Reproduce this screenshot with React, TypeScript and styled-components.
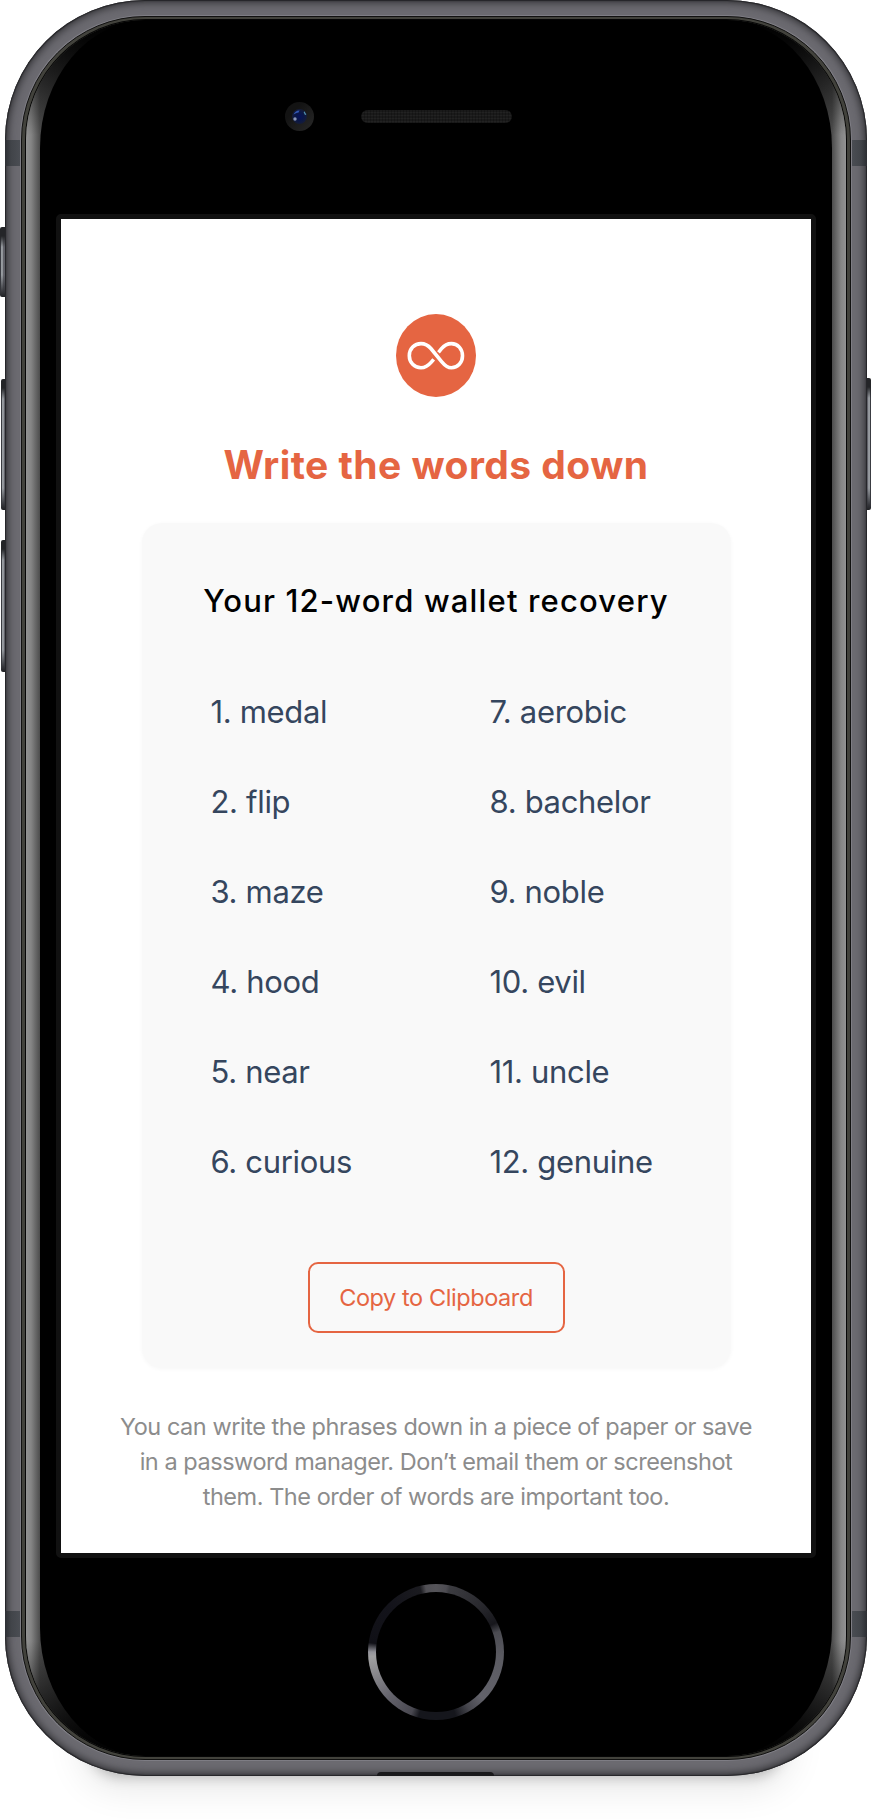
import React from "react";
import styled, { createGlobalStyle } from "styled-components";

const GlobalStyle = createGlobalStyle`
  *, *::before, *::after { box-sizing: border-box; }
  html, body { margin: 0; padding: 0; background: #fff; }
  body { font-family: Inter, "Liberation Sans", sans-serif; }
  h1, h2, p, ol { margin: 0; padding: 0; }
`;

const Stage = styled.main`
  position: relative;
  width: 871px;
  height: 1820px;
  padding-left: 5px;
  overflow: hidden;
  background: #fff;
`;

const FloorShadow = styled.div`
  position: absolute;
  left: 90px;
  top: 1690px;
  width: 692px;
  height: 78px;
  border-radius: 30px;
  box-shadow: 0 8px 14px rgba(0, 0, 0, 0.26), 0 12px 36px 8px rgba(0, 0, 0, 0.1);
`;

const SideButton = styled.span<{ $side: "left" | "right"; $top: number; $height: number; $inset?: number }>`
  position: absolute;
  ${(p) => p.$side}: ${(p) => p.$inset ?? 0}px;
  top: ${(p) => p.$top}px;
  width: 7px;
  height: ${(p) => p.$height}px;
  border-radius: 2px;
  background:
    linear-gradient(#242528 0, #242528 9px, transparent 20px, transparent calc(100% - 22px), #34353a calc(100% - 5px), #202124),
    linear-gradient(${(p) => (p.$side === "left" ? "90deg" : "270deg")}, #3a3c42 0, #3a3c42 1px, #9a9ea3 1px, #8f9398 3px, #62636a 3px, #5d5d65 6px, #333338 7px);
`;

const Body = styled.div`
  position: relative;
  width: 862px;
  height: 1776px;
  padding: 16px;
  border-radius: 140px;
  background: #6b6a70;
  box-shadow: inset 0 0 1px 1px #242427, inset 0 0 9px 2px #29292c;
`;

const Antenna = styled.span<{ $side: "left" | "right"; $top: number }>`
  position: absolute;
  ${(p) => p.$side}: 0;
  top: ${(p) => p.$top}px;
  width: 16px;
  height: 26px;
  background: linear-gradient(${(p) => (p.$side === "left" ? "90deg" : "270deg")}, #2c2e33, #414449 6px, #4b4e54);
`;

const Port = styled.span`
  position: absolute;
  left: 372px;
  bottom: 0;
  width: 117px;
  height: 4px;
  border-radius: 4px 4px 0 0;
  background: #19191b;
`;

const Rim = styled.div`
  position: relative;
  height: 100%;
  padding: 3px 4px;
  border: 1px solid #111110;
  border-radius: 124px;
  background: #42423c;
  box-shadow: 0 0 0 1px #7e7d84;
`;

const Glass = styled.div`
  height: 100%;
  padding: 0 14px;
  border-radius: 120px;
  overflow: hidden;
  box-shadow: 0 0 0 1px #060606;
  background:
    linear-gradient(rgba(0, 0, 0, 1), rgba(0, 0, 0, 0.76) 30px, rgba(0, 0, 0, 0) 115px, rgba(0, 0, 0, 0) calc(100% - 115px), rgba(0, 0, 0, 0.76) calc(100% - 30px), #000),
    linear-gradient(90deg, #929292, #858585 5px, #4c4c4c 14px, #222 60px, #222 calc(100% - 60px), #4c4c4c calc(100% - 14px), #858585 calc(100% - 5px), #929292);
`;

const Face = styled.div`
  height: 100%;
  display: flex;
  flex-direction: column;
  align-items: center;
  background: #000;
  border-radius: 108px / 128px;
`;

const TopBezel = styled.div`
  flex: none;
  width: 100%;
  height: 194px;
  padding: 82px 0 0 245px;
  display: flex;
  align-items: flex-start;
  gap: 47px;
`;

const Speaker = styled.span`
  width: 151px;
  height: 13px;
  margin-top: 8px;
  border-radius: 7px;
  background:
    repeating-linear-gradient(90deg, rgba(0, 0, 0, 0.22) 0 1px, transparent 1px 3px),
    repeating-linear-gradient(#1a1a1a 0 2px, #222 2px 3px);
`;

const Screen = styled.section`
  flex: none;
  width: 760px;
  height: 1344px;
  border: 5px solid #111;
  border-radius: 5px;
  background: linear-gradient(#fff, #fff) padding-box;
  background-color: #111;
  display: flex;
  flex-direction: column;
  align-items: center;
`;

const Logo = styled.svg`
  display: block;
  flex: none;
  margin-top: 95px;
`;

const Title = styled.h1`
  margin-top: 43px;
  font-size: 39px;
  line-height: 50px;
  font-weight: 700;
  letter-spacing: 0.46px;
  color: #e56542;
  white-space: nowrap;
`;

const Card = styled.article`
  flex: none;
  width: 589px;
  height: 845px;
  margin-top: 33px;
  border-radius: 20px;
  background: #f9f9f9;
  box-shadow: 0 1px 4px rgba(0, 0, 0, 0.035);
  display: flex;
  flex-direction: column;
  align-items: center;
`;

const CardTitle = styled.h2`
  margin-top: 58px;
  font-size: 31px;
  line-height: 40px;
  font-weight: 500;
  letter-spacing: 1.17px;
  color: #000;
  white-space: nowrap;
`;

const WordList = styled.ol`
  width: 100%;
  margin-top: 45px;
  padding-left: 69px;
  display: grid;
  grid-template-rows: repeat(6, 90px);
  grid-auto-flow: column;
  grid-auto-columns: 279px;
  list-style: none;
`;

const Word = styled.li`
  display: flex;
  align-items: center;
  font-size: 31px;
  letter-spacing: -0.33px;
  color: #35465e;
  white-space: pre;
`;

const CopyButton = styled.button`
  flex: none;
  width: 257px;
  height: 71px;
  margin-top: 56px;
  padding: 0;
  border: 2px solid #e56542;
  border-radius: 10px;
  background: transparent;
  color: #e56542;
  font: 400 23.5px Inter, "Liberation Sans", sans-serif;
  letter-spacing: -0.42px;
  white-space: nowrap;
`;

const Hint = styled.p`
  margin-top: 41px;
  font-size: 23.5px;
  line-height: 35px;
  letter-spacing: -0.46px;
  text-align: center;
  color: #8c8c8c;
  white-space: nowrap;
`;

const HomeButton = styled.div`
  flex: none;
  width: 136px;
  height: 136px;
  margin-top: 26px;
  border-radius: 50%;
  padding: 8px;
  background: conic-gradient(#555459 0deg, #4d4c52 9deg, #3c3c41 12deg, #28282d 45deg, #17171c 64deg, #4b4b51 72deg, #5b5b62 95deg, #62626a 135deg, #46464d 150deg, #15161c 163deg, #15161c 195deg, #494850 202deg, #62616a 225deg, #a1a1a2 266deg, #93939a 270deg, #101016 278deg, #13131a 315deg, #1b1b20 346deg, #515055 351deg, #555459 360deg);
`;

const HomeGlass = styled.div`
  height: 100%;
  border-radius: 50%;
  background: #000;
`;

const words = [
  "medal", "flip", "maze", "hood", "near", "curious",
  "aerobic", "bachelor", "noble", "evil", "uncle", "genuine",
];

function Camera() {
  return (
    <svg width="29" height="29" viewBox="0 0 29 29">
      <defs>
        <linearGradient id="cameraRing" x1="0" y1="0" x2="1" y2="1">
          <stop offset="0.3" stopColor="#131313" />
          <stop offset="1" stopColor="#292929" />
        </linearGradient>
        <radialGradient id="cameraLens">
          <stop offset="0" stopColor="#07125a" />
          <stop offset="0.55" stopColor="#0a1748" />
          <stop offset="1" stopColor="#151c38" />
        </radialGradient>
      </defs>
      <circle cx="14.5" cy="14.5" r="14.5" fill="url(#cameraRing)" />
      <circle cx="14.5" cy="14.5" r="7.5" fill="url(#cameraLens)" />
      <path d="M8.6 12.4c.8-2.4 3.2-4.2 6-4l-1.3 2.3c-1.8 0-2.8.5-4.7 1.7z" fill="#3358b4" />
      <circle cx="10" cy="17" r="1.7" fill="#8996b8" />
      <path d="M19.3 9.3l2 3.3-1.3.3-1.3-2.7z" fill="#5596b4" />
    </svg>
  );
}

function InfinityLogo() {
  return (
    <Logo width="80" height="83" viewBox="0 0 80 83" role="img" aria-label="Infinity">
      <ellipse cx="40" cy="41.5" rx="40" ry="41.5" fill="#e56542" />
      <path
        fill="none"
        stroke="#fff"
        strokeWidth="3.6"
        d="M37.7 45.4l-2.6 3C32.3 51.6 29 53.8 25 53.8C18.4 53.8 13.3 48.5 13.3 41.7C13.3 34.9 18.4 29.6 25 29.6C29 29.6 32.3 31.5 34.9 34.5L45.6 47.6C48.4 51 51.5 53.8 55.4 53.8C61.8 53.8 66.5 48.5 66.5 41.7C66.5 34.9 61.8 29.6 55.4 29.6C51.5 29.6 48.2 31.4 45.5 34.7L42.5 38.3"
      />
    </Logo>
  );
}

export default function App() {
  return (
    <>
      <GlobalStyle />
      <Stage>
        <FloorShadow />
        <SideButton $side="left" $top={227} $height={70} />
        <SideButton $side="left" $top={379} $height={131} $inset={1} />
        <SideButton $side="left" $top={540} $height={132} $inset={1} />
        <SideButton $side="right" $top={378} $height={132} />
        <Body>
          <Antenna $side="left" $top={140} />
          <Antenna $side="right" $top={140} />
          <Antenna $side="left" $top={1611} />
          <Antenna $side="right" $top={1611} />
          <Port />
          <Rim>
            <Glass>
              <Face>
                <TopBezel>
                  <Camera />
                  <Speaker />
                </TopBezel>
                <Screen>
                  <InfinityLogo />
                  <Title>Write the words down</Title>
                  <Card>
                    <CardTitle>Your 12-word wallet recovery</CardTitle>
                    <WordList>
                      {words.map((word, i) => (
                        <Word key={word}>{`${i + 1}. ${word}`}</Word>
                      ))}
                    </WordList>
                    <CopyButton>Copy to Clipboard</CopyButton>
                  </Card>
                  <Hint>
                    You can write the phrases down in a piece of paper or save
                    <br />
                    in a password manager. Don’t email them or screenshot
                    <br />
                    them. The order of words are important too.
                  </Hint>
                </Screen>
                <HomeButton>
                  <HomeGlass />
                </HomeButton>
              </Face>
            </Glass>
          </Rim>
        </Body>
      </Stage>
    </>
  );
}
